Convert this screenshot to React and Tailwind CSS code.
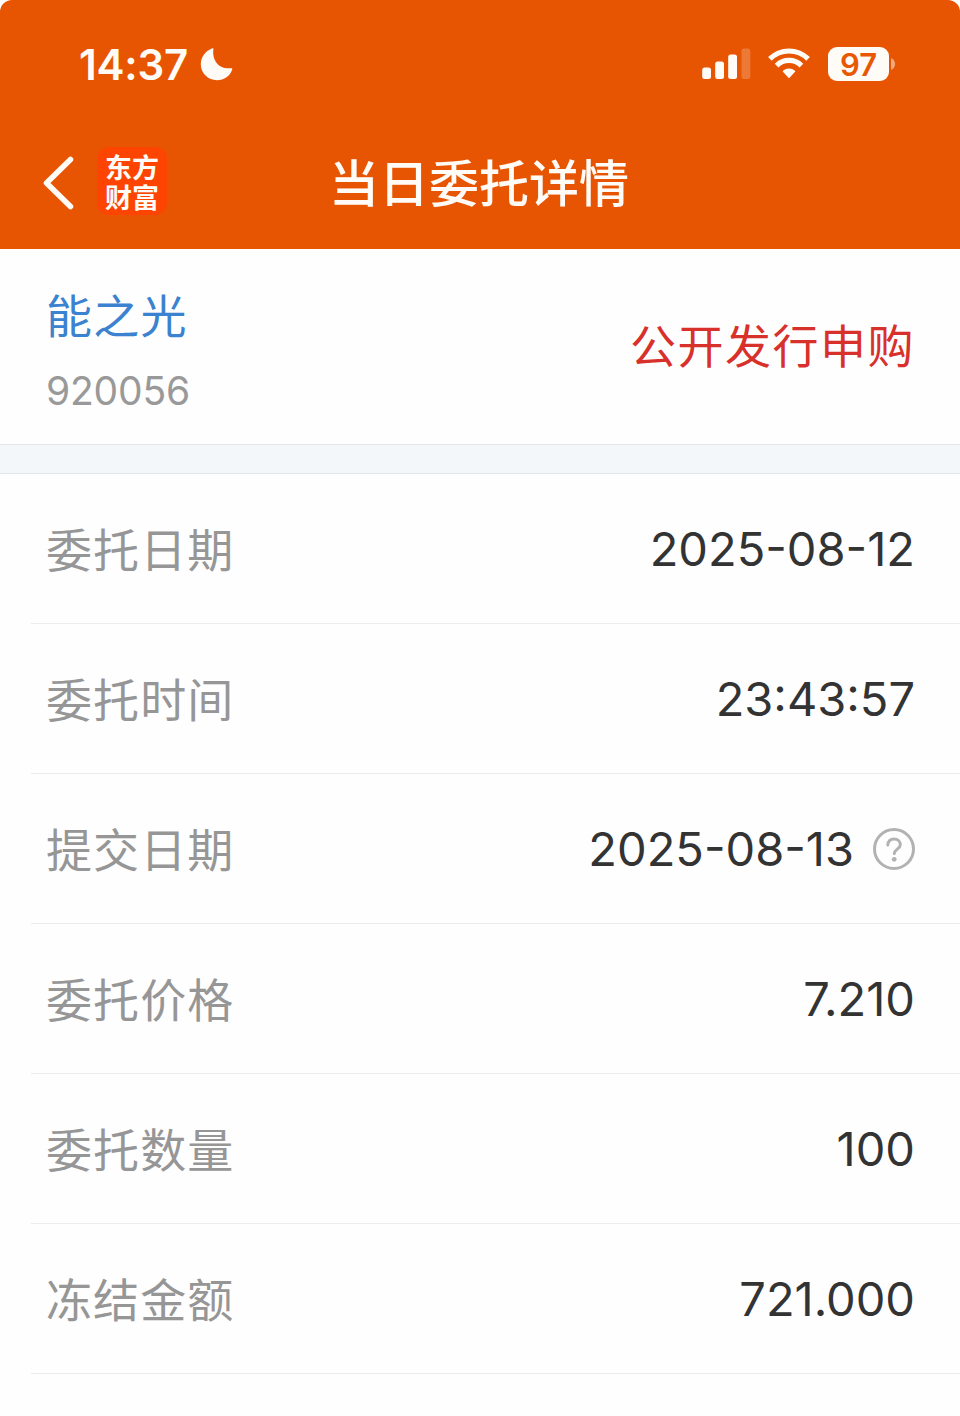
const rows = [
  { label: '委托日期', value: '2025-08-12' },
  { label: '委托时间', value: '23:43:57' },
  { label: '提交日期', value: '2025-08-13', help: true },
  { label: '委托价格', value: '7.210' },
  { label: '委托数量', value: '100' },
  { label: '冻结金额', value: '721.000' },
]

function StatusBar() {
  return (
    <div className="flex h-[128px] items-center pl-[79px] pr-[65px]">
      <span className="pt-px font-['Inter',sans-serif] text-[42px] leading-none font-semibold tracking-[-0.2px]">14:37</span>
      <svg className="ml-[12px] h-[34px] w-[34px]" viewBox="0 0 34 34" fill="currentColor">
        <path d="M12.400 1.300c.6-.3 1.200.2 1 .9C11.800 12.500 18.500 22.800 31.200 21.200c.8-.1 1.300.5 1 1.200C30.200 28.800 24 33.200 17 33.200 8 33.200.800 26.300.800 17.300.800 10 5.500 4 12.400 1.300z" />
      </svg>
      {/* signal */}
      <svg className="ml-auto h-[32px] w-[50px]" viewBox="0 0 50 32" fill="currentColor">
        <rect x="1.200" y="19.500" width="8.800" height="11.500" rx="2.500" />
        <rect x="14.200" y="13.500" width="8.800" height="17.500" rx="2.500" />
        <rect x="27.200" y="6.500" width="8.800" height="24.500" rx="2.500" />
        <rect x="40.500" y="0.500" width="8.800" height="30.500" rx="2.500" opacity="0.220" />
      </svg>
      {/* wifi */}
      <svg className="ml-[17px] h-[32px] w-[42px]" viewBox="0 0 42 32" fill="none" stroke="currentColor" strokeWidth="5.200">
        <path d="M1.900 10.900a27 27 0 0 1 38.200 0" />
        <path d="M8.600 17.600a17.500 17.500 0 0 1 24.800 0" />
        <path d="M15.500 23.200a8.500 8.500 0 0 1 11 0l-5.500 6z" fill="currentColor" strokeWidth="1.500" strokeLinejoin="round" />
      </svg>
      <div className="ml-[18px] flex h-[34px] w-[61px] items-center justify-center rounded-[9px] bg-[#fffcf8]">
        <span className="font-['Inter',sans-serif] text-[31px] leading-none font-semibold text-[#e85803]">97</span>
      </div>
      <svg className="ml-[2px] h-[12px] w-[4px] opacity-50" viewBox="0 0 4 12" fill="currentColor">
        <path d="M0 0c2.500 1 4 3.200 4 6s-1.500 5-4 6z" />
      </svg>
    </div>
  )
}

function NavBar() {
  return (
    <div className="relative flex h-[121px] items-start">
      <svg className="mt-[27px] ml-[42px] h-[56px] w-[34px]" viewBox="0 0 34 56" fill="none" stroke="currentColor" strokeWidth="5.500" strokeLinecap="round" strokeLinejoin="round">
        <path d="M28.500 4.500L4.500 28L28.500 51.500" />
      </svg>
      <div className="mt-[19px] ml-[21px] flex h-[68px] w-[70px] flex-col items-center justify-center rounded-[12px] bg-[#fd4401] pt-[2px] font-['Noto_Sans_CJK_SC',sans-serif] text-[27px] leading-[30px] font-bold">
        <span>东方</span>
        <span>财富</span>
      </div>
      <h1 className="absolute inset-x-0 top-[16px] pr-[2px] text-center text-[50px] leading-[72px] font-medium">当日委托详情</h1>
    </div>
  )
}

function HelpIcon() {
  return (
    <svg className="ml-[19px] h-[42px] w-[42px] text-[#b2b2b2]" viewBox="0 0 42 42" fill="none" stroke="currentColor" strokeWidth="3" strokeLinecap="round">
      <circle cx="21" cy="21" r="19.500" />
      <path d="M14.800 17c0-3.700 2.600-6 6.200-6s6.300 2.300 6.300 5.700c0 4.300-6 4.600-6 8.900" />
      <circle cx="21.200" cy="31.300" r="2.400" fill="currentColor" stroke="none" />
    </svg>
  )
}

export default function App() {
  return (
    <div className="h-[1416px] w-[960px] overflow-hidden bg-[#fefefe] font-['Noto_Sans_CJK_SC',sans-serif]">
      <header className="h-[249px] rounded-t-[12px] bg-[#e85502] text-[#fffcf8]">
        <StatusBar />
        <NavBar />
      </header>

      <section className="flex h-[195px] items-center justify-between pr-[45px] pl-[46px]">
        <div className="flex flex-col">
          <span className="text-[46px] leading-[68px] tracking-[1.300px] text-[#3b82d0]">能之光</span>
          <span className="mt-[20px] font-['Inter',sans-serif] text-[39px] leading-[48px] tracking-[-0.2px] text-[#999999]">920056</span>
        </div>
        <span className="pb-[7px] text-[46px] leading-[68px] tracking-[1.500px] text-[#d8302b]">公开发行申购</span>
      </section>

      <div className="h-[30px] border-y border-[#e4e7e9] bg-[#f4f7f9]" />

      <ul>
        {rows.map((row) => (
          <li key={row.label} className="ml-[31px] flex h-[150px] items-center border-b border-[#ececec] pr-[45px] pl-[15px]">
            <span className="pb-[4px] text-[46px] leading-[68px] tracking-[1.100px] text-[#969696]">{row.label}</span>
            <span className="ml-auto pt-px font-['Inter',sans-serif] text-[47px] leading-[60px] text-[#333333]">{row.value}</span>
            {row.help && <HelpIcon />}
          </li>
        ))}
      </ul>
    </div>
  )
}
